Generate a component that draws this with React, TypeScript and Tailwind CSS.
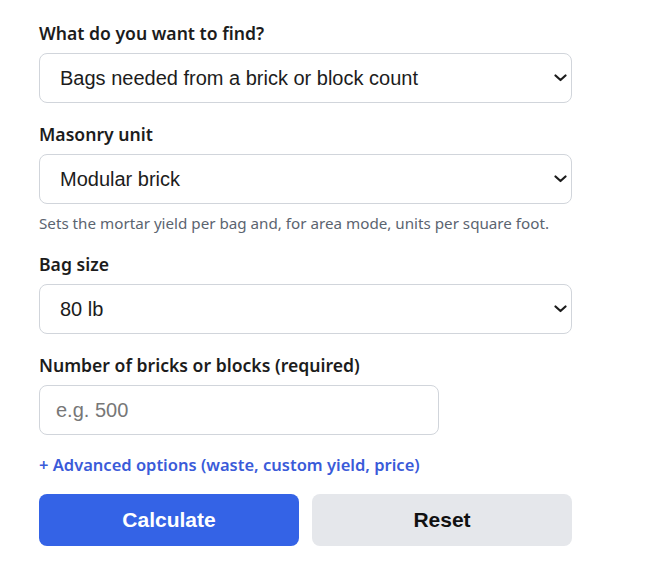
import { useState } from "react";

const labelCls = "block mb-2 text-[17.6px] leading-6 font-semibold text-[#1c1c1c]";
const baseField =
  "block h-[50px] rounded-lg border border-[#d1d5db] bg-white text-[20px] text-[#1c1c1c] font-['Liberation_Sans',Arial,sans-serif] outline-none";

function Select({ value, onChange, options }: { value: string; onChange: (v: string) => void; options: [string, string][] }) {
  return (
    <div className="relative">
      <select
        className={`${baseField} w-full appearance-none pl-5 pr-8`}
        value={value}
        onChange={(e) => onChange(e.target.value)}
      >
        {options.map(([v, l]) => (
          <option key={v} value={v}>
            {l}
          </option>
        ))}
      </select>
      <svg
        className="pointer-events-none absolute right-[5px] top-1/2 -translate-y-1/2"
        width="13"
        height="8"
        viewBox="0 0 13 8"
        fill="none"
      >
        <path d="M1.5 1.5l5 4.5 5-4.5" stroke="#1c1c1c" strokeWidth="2.2" strokeLinecap="round" strokeLinejoin="round" />
      </svg>
    </div>
  );
}

export default function App() {
  const [mode, setMode] = useState("count");
  const [unit, setUnit] = useState("modular");
  const [bag, setBag] = useState("80");
  const [count, setCount] = useState("");

  return (
    <div className="min-h-screen bg-white px-[39px] pt-[21px] font-['Noto_Sans',sans-serif]">
      <div className="w-[533px]">
        <div>
          <label className={labelCls}>What do you want to find?</label>
          <Select
            value={mode}
            onChange={setMode}
            options={[
              ["count", "Bags needed from a brick or block count"],
              ["area", "Bags needed from a wall area"],
            ]}
          />
        </div>

        <div className="mt-[19px]">
          <label className={labelCls}>Masonry unit</label>
          <Select
            value={unit}
            onChange={setUnit}
            options={[
              ["modular", "Modular brick"],
              ["block", "8 in. CMU block"],
            ]}
          />
          <p className="mt-[9px] text-[15.2px] leading-5 text-[#5b6470]">
            Sets the mortar yield per bag and, for area mode, units per square foot.
          </p>
        </div>

        <div className="mt-[19px]">
          <label className={labelCls}>Bag size</label>
          <Select
            value={bag}
            onChange={setBag}
            options={[
              ["80", "80 lb"],
              ["60", "60 lb"],
            ]}
          />
        </div>

        <div className="mt-[19px]">
          <label className={labelCls}>Number of bricks or blocks (required)</label>
          <input
            type="text"
            value={count}
            onChange={(e) => setCount(e.target.value)}
            placeholder="e.g. 500"
            className={`${baseField} w-[400px] px-4 placeholder:text-[#777]`}
          />
        </div>

        <button className="mt-[18px] block text-[16.5px] leading-6 font-semibold text-[#3a5bd9]">
          + Advanced options (waste, custom yield, price)
        </button>

        <div className="mt-[17px] grid grid-cols-2 gap-[13px]">
          <button className="h-[52px] rounded-lg bg-[#3463e6] text-[21px] font-bold text-white font-['Liberation_Sans',Arial,sans-serif]">
            Calculate
          </button>
          <button className="h-[52px] rounded-lg bg-[#e5e7eb] text-[21px] font-bold text-[#111] font-['Liberation_Sans',Arial,sans-serif]">
            Reset
          </button>
        </div>
      </div>
    </div>
  );
}
